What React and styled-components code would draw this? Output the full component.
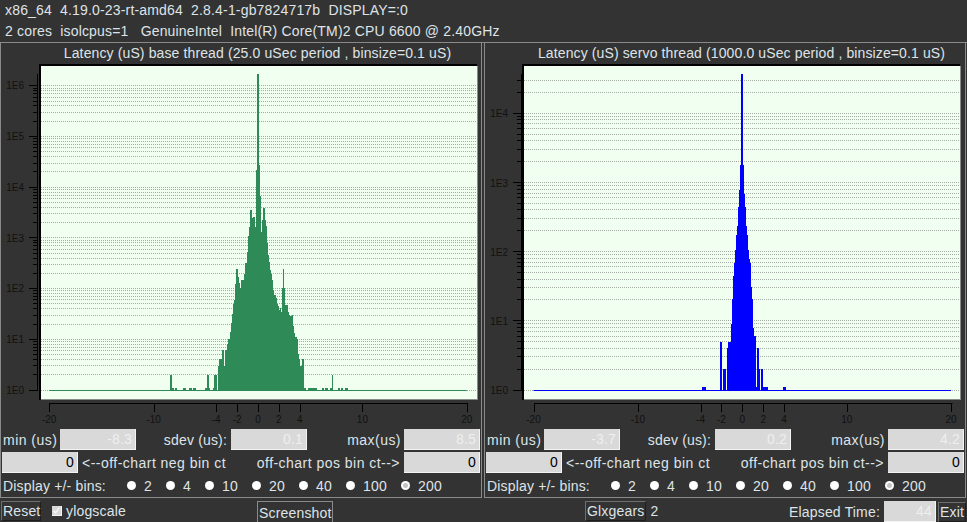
import React from 'react';
import styled, { createGlobalStyle } from 'styled-components';

const GlobalStyle = createGlobalStyle`
  html, body { margin: 0; padding: 0; background: #333333; }
  body { font-family: "Liberation Sans", Arial, sans-serif; font-size: 14px; color: #dfe3e8; letter-spacing: 0.17px; }
`;

const BINS = [2, 4, 10, 20, 40, 100, 200];

// [x from, x to, top y] in page pixels, read off the picture
const baseBars = [
  [170, 172, 375], [172, 174, 388], [175, 177, 388], [183, 186, 388], [189, 192, 388], [193, 196, 388],
  [205, 207, 388], [207, 209, 375], [209, 210, 388], [213, 214, 388], [214, 217, 375],
  [218, 219, 366], [219, 222, 359], [222, 224, 350], [224, 225, 366], [225, 227, 350], [227, 228, 344],
  [228, 230, 339], [230, 231, 332], [231, 232, 323], [232, 233, 314], [233, 234, 304], [234, 235, 300],
  [235, 236, 284], [236, 238, 269], [238, 239, 277], [239, 240, 283], [240, 241, 288], [241, 244, 280],
  [244, 245, 274], [245, 247, 263], [247, 248, 252], [248, 249, 236], [249, 250, 227], [250, 252, 210],
  [252, 253, 218], [253, 255, 217], [255, 256, 227], [256, 257, 170], [257, 259, 74], [259, 260, 165],
  [260, 261, 196], [261, 262, 232], [262, 263, 220], [263, 265, 208], [265, 266, 220], [266, 267, 226],
  [267, 268, 243], [268, 269, 255], [269, 270, 262], [270, 271, 270], [271, 272, 274], [272, 273, 280],
  [273, 274, 290], [274, 276, 295], [276, 277, 298], [277, 278, 304], [278, 279, 306], [279, 280, 310],
  [280, 281, 308], [281, 282, 312], [282, 283, 288], [283, 284, 269], [284, 285, 288], [285, 288, 305],
  [288, 289, 312], [289, 290, 315], [290, 292, 316], [292, 293, 315], [293, 294, 326], [294, 295, 333],
  [295, 297, 337], [297, 298, 339], [298, 299, 354], [299, 300, 359], [300, 302, 366], [302, 304, 359],
  [304, 306, 388], [308, 317, 388], [322, 324, 388], [325, 328, 388], [330, 332, 388], [332, 333, 375],
  [338, 340, 388], [341, 343, 388], [345, 348, 388],
];

const servoBars = [
  [702, 706, 387], [720, 722, 342], [723, 726, 369], [727, 728, 348], [728, 731, 342], [731, 732, 324],
  [732, 733, 299], [733, 734, 276], [734, 735, 263], [735, 736, 250], [736, 737, 235], [737, 738, 226],
  [738, 739, 207], [739, 740, 190], [740, 741, 165], [741, 743, 74], [743, 744, 165], [744, 745, 194],
  [745, 746, 207], [746, 747, 226], [747, 748, 235], [748, 749, 250], [749, 750, 259], [750, 751, 263],
  [751, 752, 287], [752, 753, 299], [753, 754, 328], [754, 756, 336], [756, 757, 387], [757, 759, 348],
  [759, 760, 369], [761, 763, 369], [763, 768, 387], [783, 786, 387],
];

function logLevels(decade, decades) {
  const levels = [];
  for (let d = 0; d < decades; d++) {
    for (let m = 1; m <= 9; m++) {
      const y = Math.floor(390 - (d + Math.log10(m)) * decade);
      if (y > 75) levels.push({ y, major: m === 1 });
    }
  }
  return levels;
}

function Histogram({ offset, plotX, axisGap, zero, color, bars, decade, decades, labels }) {
  // svg sits inside the panel border, page y 62
  const unit = 10.44;
  const X = (x) => x - offset;
  const Y = (y) => y - 62;
  const tickX = [-20, -10, -4, -2, 0, 2, 4, 10, 20];
  const plotLeft = X(plotX);
  const levels = logLevels(decade, decades);
  return (
    <ChartSvg viewBox="0 0 480 366">
      <rect x={plotLeft - 2} y={Y(64)} width={438} height={2} fill="#000" />
      <rect x={plotLeft - 2} y={Y(64)} width={2} height={336} fill="#000" />
      <rect x={plotLeft} y={Y(66)} width={436} height={333} fill="#f0fff0" />
      <rect x={plotLeft} y={Y(399)} width={436} height={1} fill="#8a8a8a" />
      <rect x={plotLeft + 436} y={Y(66)} width={1} height={334} fill="#8a8a8a" />
      {levels.map((l) => (
        <GridLine key={l.y} x1={plotLeft} x2={plotLeft + 436} y1={Y(l.y) + 0.5} y2={Y(l.y) + 0.5} />
      ))}
      <rect x={X(zero - 20 * unit)} y={Y(390)} width={40 * unit} height={1} fill={color} />
      {bars.map(([from, to, top]) => (
        <rect key={from} x={X(from)} y={Y(top)} width={to - from} height={391 - top} fill={color} />
      ))}

      <rect x={plotLeft - axisGap} y={Y(74)} width={1} height={317} fill="#000" />
      {levels.map((l) => (
        <rect
          key={l.y}
          x={plotLeft - axisGap - (l.major ? 8 : 4)}
          y={Y(l.y)}
          width={l.major ? 8 : 4}
          height={1}
          fill="#000"
        />
      ))}
      {labels.map((l) => (
        <AxisText key={l.text} x={plotLeft - axisGap - 13} y={Y(l.y + 3.5)} textAnchor="end">{l.text}</AxisText>
      ))}

      <rect x={Math.round(X(zero - 20 * unit))} y={Y(403)} width={40 * unit + 1} height={1} fill="#000" />
      {tickX.map((v) => (
        <g key={v}>
          <rect x={Math.round(X(zero + v * unit))} y={Y(403)} width={1} height={9} fill="#000" />
          <AxisText x={X(zero + v * unit)} y={Y(423)} textAnchor="middle">{v}</AxisText>
        </g>
      ))}
    </ChartSvg>
  );
}

function Panel({ title, min, sdev, max, chart }) {
  return (
    <PanelFrame>
      <PanelTitle>{title}</PanelTitle>
      {chart}
      <StatsRow>
        <WideLabel>min (us)</WideLabel>
        <ReadOnlyField>{min}</ReadOnlyField>
        <FieldLabel>sdev (us):</FieldLabel>
        <ReadOnlyField>{sdev}</ReadOnlyField>
        <WideLabel>max(us)</WideLabel>
        <ReadOnlyField>{max}</ReadOnlyField>
      </StatsRow>
      <OffChartRow>
        <CountField>0</CountField>
        <WideLabel>&lt;--off-chart neg bin ct</WideLabel>
        <OffChartRight>
          <WideLabel>off-chart pos bin ct--&gt;</WideLabel>
          <CountField>0</CountField>
        </OffChartRight>
      </OffChartRow>
      <BinsRow>
        <BinsLabel>Display +/- bins:</BinsLabel>
        {BINS.map((b) => (
          <BinOption key={b} $digits={String(b).length}>
            <RadioDot $selected={b === 200} />
            <span>{b}</span>
          </BinOption>
        ))}
      </BinsRow>
    </PanelFrame>
  );
}

export default function App() {
  return (
    <Page>
      <GlobalStyle />
      <Header>
        <HeaderLine>x86_64&nbsp; 4.19.0-23-rt-amd64&nbsp; 2.8.4-1-gb7824717b&nbsp; DISPLAY=:0</HeaderLine>
        <HeaderLine>2 cores&nbsp; isolcpus=1&nbsp;&nbsp; GenuineIntel&nbsp; Intel(R) Core(TM)2 CPU 6600 @ 2.40GHz</HeaderLine>
      </Header>
      <Panels>
        <Panel
          title="Latency (uS) base thread (25.0 uSec period , binsize=0.1 uS)"
          min="-8.3"
          sdev="0.1"
          max="8.5"
          chart={
            <Histogram
              offset={1}
              plotX={41}
              axisGap={4}
              zero={258}
              color="#2e8b57"
              bars={baseBars}
              decade={50.7}
              decades={7}
              labels={[
                { text: '1E6', y: 85.5 }, { text: '1E5', y: 136 }, { text: '1E4', y: 187 },
                { text: '1E3', y: 238 }, { text: '1E2', y: 288 }, { text: '1E1', y: 339 }, { text: '1E0', y: 390 },
              ]}
            />
          }
        />
        <Panel
          title="Latency (uS) servo thread (1000.0 uSec period , binsize=0.1 uS)"
          min="-3.7"
          sdev="0.2"
          max="4.2"
          chart={
            <Histogram
              offset={485}
              plotX={524}
              axisGap={3}
              zero={742.3}
              color="#0000ff"
              bars={servoBars}
              decade={69.2}
              decades={5}
              labels={[
                { text: '1E4', y: 113.5 }, { text: '1E3', y: 183 }, { text: '1E2', y: 252 },
                { text: '1E1', y: 321 }, { text: '1E0', y: 390 },
              ]}
            />
          }
        />
      </Panels>
      <Footer>
        <FooterGroup>
          <ResetButton>Reset</ResetButton>
          <CheckBox>
            <svg width="9" height="9" viewBox="0 0 9 9">
              <path d="M1.5 4.5 L3.5 7 L7.5 1.5" fill="none" stroke="#f4f4f4" strokeWidth="1.4" />
            </svg>
          </CheckBox>
          <span>ylogscale</span>
        </FooterGroup>
        <ScreenshotButton>Screenshot</ScreenshotButton>
        <GearsGroup>
          <RaisedButton>Glxgears</RaisedButton>
          <span>2</span>
        </GearsGroup>
        <ElapsedGroup>
          <span>Elapsed Time:</span>
          <ElapsedField>44</ElapsedField>
          <RaisedButton>Exit</RaisedButton>
        </ElapsedGroup>
      </Footer>
    </Page>
  );
}

const Page = styled.div`
  width: 967px;
  height: 522px;
  overflow: hidden;
  background: #333333;
`;

const Header = styled.div`
  height: 43px;
  padding-left: 5px;
  box-sizing: border-box;
  border-bottom: 1px solid #8a8a8a;
`;

const HeaderLine = styled.div`
  height: 21px;
  line-height: 21px;
  white-space: nowrap;
`;

const Panels = styled.div`
  display: flex;
  gap: 2px;
  height: 455px;
`;

const PanelFrame = styled.div`
  width: 482px;
  box-sizing: border-box;
  border: 1px solid #8a8a8a;
  border-top: 0;
  display: flex;
  flex-direction: column;
`;

const PanelTitle = styled.div`
  height: 19px;
  line-height: 20px;
  padding-left: 33px;
  text-align: center;
  white-space: nowrap;
  letter-spacing: 0.12px;
`;

const ChartSvg = styled.svg`
  display: block;
  width: 480px;
  height: 366px;
`;

const GridLine = styled.line`
  stroke: #a4aca4;
  stroke-dasharray: 1 1;
`;

const AxisText = styled.text`
  font-family: "Liberation Sans", Arial, sans-serif;
  font-size: 10px;
  letter-spacing: 0;
  fill: #111111;
`;

const StatsRow = styled.div`
  display: grid;
  grid-template-columns: 57px 76px 95px 76px 97px 76px;
  align-items: center;
  height: 23px;
  padding-left: 2px;
  & > span:nth-child(3) { justify-self: end; padding-right: 4px; }
  & > span:nth-child(5) { justify-self: end; padding-right: 3px; }
`;

const FieldLabel = styled.span`
  white-space: nowrap;
`;

const WideLabel = styled(FieldLabel)`
  letter-spacing: 0.47px;
`;

const Field = styled.div`
  width: 76px;
  height: 21px;
  line-height: 21px;
  box-sizing: border-box;
  background: #d9d9d9;
  border-right: 1px solid #f4f4f4;
  border-bottom: 1px solid #f4f4f4;
  text-align: right;
  padding-right: 3px;
`;

const ReadOnlyField = styled(Field)`
  color: #efefef;
`;

const CountField = styled(Field)`
  color: #000000;
`;

const OffChartRow = styled.div`
  display: flex;
  align-items: center;
  gap: 4px;
  height: 23px;
  padding: 0 1px;
`;

const OffChartRight = styled.div`
  margin-left: auto;
  display: flex;
  align-items: center;
  gap: 4px;
`;

const BinsRow = styled.div`
  display: flex;
  align-items: center;
  height: 23px;
  padding-left: 2px;
`;

const BinsLabel = styled.span`
  width: 124px;
  white-space: nowrap;
`;

const BinOption = styled.span`
  display: flex;
  align-items: center;
  gap: 8px;
  width: ${(p) => 31 + p.$digits * 8}px;
`;

const RadioDot = styled.span`
  width: 9px;
  height: 9px;
  border-radius: 50%;
  background: ${(p) => (p.$selected ? 'radial-gradient(circle, #c4c4c4 0 2px, #ffffff 3px)' : '#ffffff')};
`;

const Footer = styled.div`
  display: flex;
  align-items: flex-start;
  height: 24px;
  padding: 3px 1px 0 0;
  box-sizing: border-box;
`;

const FooterGroup = styled.div`
  display: flex;
  align-items: center;
  width: 257px;
  gap: 4px;
`;

const RaisedButton = styled.div`
  height: 20px;
  line-height: 18px;
  padding: 0 1px;
  box-sizing: border-box;
  border: 1px solid #6e6e6e;
  border-right-color: #1e1e1e;
  border-bottom-color: #1e1e1e;
  white-space: nowrap;
`;

const ResetButton = styled(RaisedButton)`
  width: 40px;
  margin-left: 1px;
`;

const ScreenshotButton = styled(RaisedButton)`
  width: 76px;
  height: 22px;
  line-height: 22px;
  border-color: #8a8a8a;
`;

const CheckBox = styled.span`
  width: 10px;
  height: 10px;
  margin-left: 7px;
  box-sizing: border-box;
  background: #d9d9d9;
  border-right: 1px solid #f4f4f4;
  border-bottom: 1px solid #f4f4f4;
  display: flex;
`;

const GearsGroup = styled.div`
  display: flex;
  align-items: center;
  gap: 4px;
  margin-left: 252px;
`;

const ElapsedGroup = styled.div`
  margin-left: auto;
  display: flex;
  align-items: center;
  gap: 2px;
  & > span { margin-right: 2px; }
`;

const ElapsedField = styled(Field)`
  width: 52px;
  color: #efefef;
`;
